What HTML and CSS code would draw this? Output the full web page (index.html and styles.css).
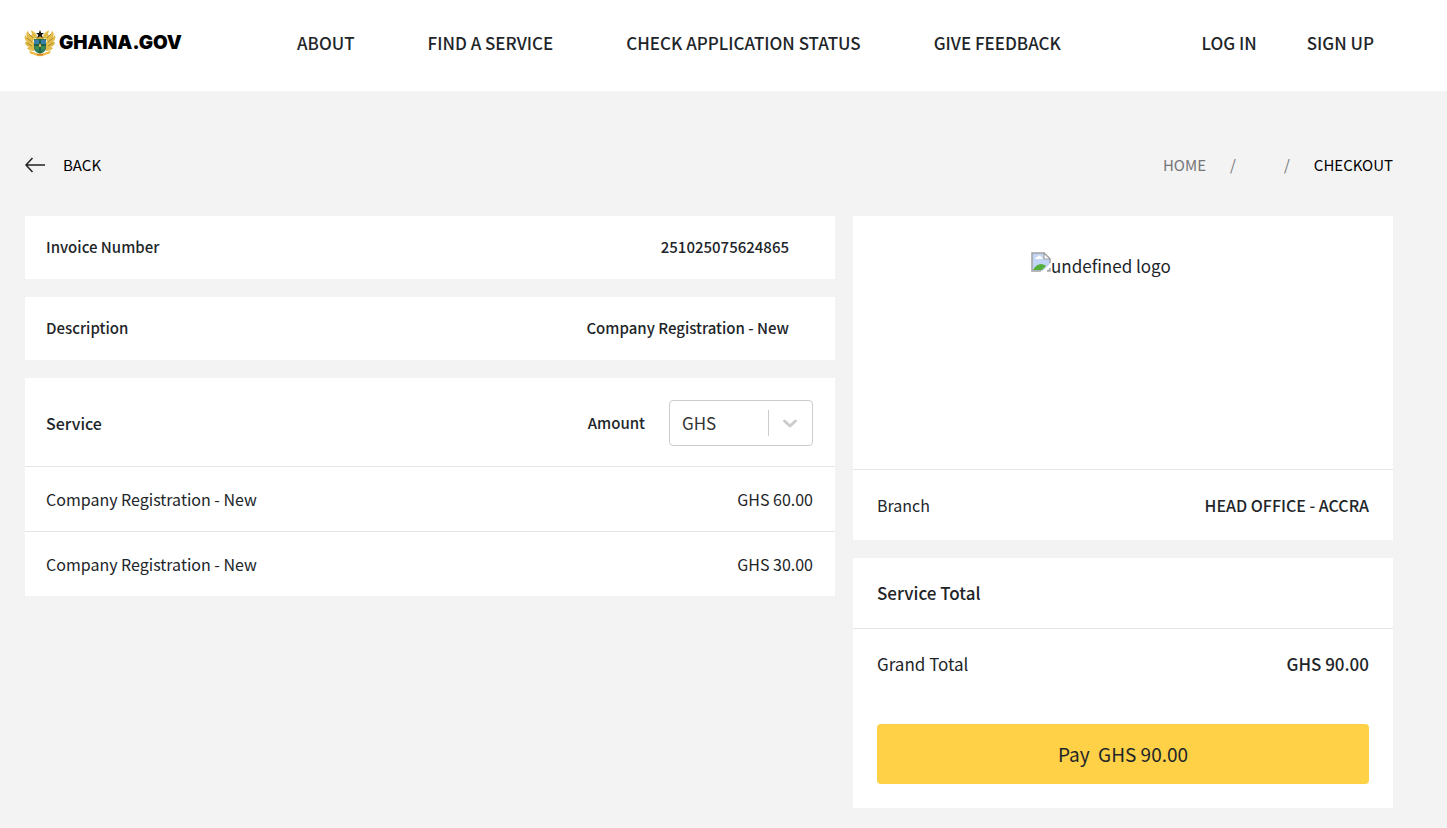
FILE: index.html
```
<!DOCTYPE html>
<html lang="en">
<head>
<meta charset="utf-8">
<title>Checkout - Ghana.GOV</title>
<link rel="stylesheet" href="styles.css">
</head>
<body>
<header class="site-header">
  <a class="brand" href="#" aria-label="Ghana.GOV home">
    <svg class="crest" viewBox="0 0 32 28" aria-hidden="true">
      <path d="M7 1C9 2 12 4 13 7L11 9L9 12L12 18L10 22C7 22 4 21 3 19L5 18C2 17 1 15 1 13L3 13C1 11 0 9 1 6L3 8C2 5 2 3 4 2L6 6L8 6Z" fill="#e2bd4c"/>
      <path d="M25 1C23 2 20 4 19 7L21 9L23 12L20 18L22 22C25 22 28 21 29 19L27 18C30 17 31 15 31 13L29 13C31 11 32 9 31 6L29 8C30 5 30 3 28 2L26 6L24 6Z" fill="#e2bd4c"/>
      <path d="M3 9L8 13M3 14L8 17M5 5L9 9M29 9L24 13M29 14L24 17M27 5L23 9" fill="none" stroke="#b08d2b" stroke-width="1"/>
      <path d="M10 10H22V19C22 22 19 24 16 25C13 24 10 22 10 19Z" fill="#2b7a5c"/>
      <path d="M10 11H15V15H10ZM17 11H22V15H17Z" fill="#3c7fa6"/>
      <path d="M11 17H15V22L11 20ZM17 17H21V20L17 22Z" fill="#3f8a54"/>
      <path d="M16 10V24M10 16H22" stroke="#1a5a48" stroke-width="1.500"/>
      <path d="M15 15H17V18H15Z" fill="#d9b343"/>
      <path d="M11 8C13 7 19 7 21 8L20 10H12Z" fill="#c9a63e"/>
      <path d="M16 1L17.200 4H20L17.800 6L18.600 9L16 7.200L13.400 9L14.200 6L12 4H14.800Z" fill="#17170f"/>
      <path d="M5 22C9 22 11 25 16 24.500C21 25 23 22 27 22L25 25C21 25 20 28 16 27C12 28 11 25 7 25Z" fill="#efb53a"/>
      <path d="M13 25.500C15 26 17 26 19 25.500" fill="none" stroke="#cf6d35"/>
    </svg>
    <span class="brand-name">GHANA.GOV</span>
  </a>
  <nav class="main-nav" aria-label="Main">
    <a href="#">ABOUT</a>
    <a href="#">FIND A SERVICE</a>
    <a href="#">CHECK APPLICATION STATUS</a>
    <a href="#">GIVE FEEDBACK</a>
  </nav>
  <nav class="account-nav" aria-label="Account">
    <a href="#">LOG IN</a>
    <a href="#">SIGN UP</a>
  </nav>
</header>
<main class="page">
  <div class="page-bar">
    <a class="back" href="#">
      <svg class="back-icon" viewBox="0 0 20 16" aria-hidden="true"><path d="M20 8H1M7.500 1L1 8L7.500 15" fill="none" stroke="#222" stroke-width="1.500"/></svg>
      <span>BACK</span>
    </a>
    <nav class="crumbs" aria-label="Breadcrumb">
      <a href="#">HOME</a>
      <span class="slash">/</span>
      <span class="slash">/</span>
      <span class="current">CHECKOUT</span>
    </nav>
  </div>
  <div class="columns">
    <div class="stack">
      <section class="card fact">
        <span>Invoice Number</span>
        <span>251025075624865</span>
      </section>
      <section class="card fact">
        <span>Description</span>
        <span>Company Registration - New</span>
      </section>
      <table class="card services">
        <thead>
          <tr>
            <th scope="col">Service</th>
            <th scope="col">
              <div class="amount">
                <label for="currency">Amount</label>
                <div class="picker">
                  <select id="currency"><option>GHS</option></select>
                  <svg class="picker-icon" viewBox="0 0 44 26" aria-hidden="true"><path d="M0.500 0V26" stroke="#ccc"/><path d="M16.500 11L22 16L27.500 11" fill="none" stroke="#ccc" stroke-width="3" stroke-linecap="round" stroke-linejoin="round"/></svg>
                </div>
              </div>
            </th>
          </tr>
        </thead>
        <tbody>
          <tr><td>Company Registration - New</td><td>GHS 60.00</td></tr>
          <tr><td>Company Registration - New</td><td>GHS 30.00</td></tr>
        </tbody>
      </table>
    </div>
    <div class="stack">
      <section class="card">
        <div class="logo-box">
          <div class="logo-fallback">
            <svg class="broken" viewBox="0 0 20 20" aria-hidden="true">
              <path d="M1 1H13L19 7V19H1Z" fill="#c3d5f5"/>
              <path d="M4 7C4 5 6 5 6.500 5C7 3 10 3 10 5C12 5 12 7 11 7Z" fill="#fff"/>
              <path d="M2 18C4 14 7 12 10 12C12 12 14 13 15 14L11 18Z" fill="#55ad3c"/>
              <path d="M10.500 20L20 11V15L14.500 20Z" fill="#fff"/>
              <path d="M10 19H1V1H13L19 7V11M19 16V19H16" fill="none" stroke="#a3a3a3" stroke-width="1.500"/>
              <path d="M13 1V7H19Z" fill="#fff" stroke="#a3a3a3" stroke-width="1.200"/>
            </svg>
            <span>undefined logo</span>
          </div>
        </div>
        <div class="line ruled">
          <span>Branch</span>
          <strong>HEAD OFFICE - ACCRA</strong>
        </div>
      </section>
      <section class="card">
        <h2 class="line total-title">Service Total</h2>
        <div class="line ruled large">
          <span>Grand Total</span>
          <strong>GHS 90.00</strong>
        </div>
        <div class="pay-box">
          <button class="pay" type="button">Pay&nbsp; GHS 90.00</button>
        </div>
      </section>
    </div>
  </div>
</main>
</body>
</html>
```
FILE: styles.css
```
* {
  box-sizing: border-box;
}

body {
  margin: 0;
  background: #f3f3f3;
  color: #212529;
  font: 400 16px/24px "Noto Sans CJK SC", "Open Sans", sans-serif;
}

a {
  color: inherit;
  text-decoration: none;
}

strong {
  font-weight: 500;
}

.site-header {
  display: flex;
  align-items: center;
  padding: 29px 73px 34px 24px;
  background: #fff;
  font-size: 17px;
  font-weight: 500;
}

.brand {
  display: flex;
  align-items: center;
  gap: 3px;
  color: #000;
}

.crest {
  width: 32px;
  height: 28px;
}

.brand-name {
  font: 900 19px/28px Inter, Lato, sans-serif;
}

.main-nav {
  display: flex;
  gap: 73px;
  margin-left: 115px;
}

.account-nav {
  display: flex;
  gap: 50px;
  margin-left: auto;
}

.page {
  padding: 62px 54px 20px 25px;
}

.page-bar {
  display: flex;
  align-items: center;
  justify-content: space-between;
  margin-bottom: 39px;
  font-size: 15px;
  color: #000;
}

.back {
  display: flex;
  align-items: center;
  gap: 18px;
}

.back-icon {
  width: 20px;
  height: 16px;
}

.crumbs {
  display: flex;
  gap: 24px;
  color: #767676;
}

.slash + .slash {
  margin-left: 24px;
}

.current {
  color: #000;
}

.columns {
  display: grid;
  grid-template-columns: 3fr 2fr;
  align-items: start;
  gap: 18px;
}

.stack {
  display: grid;
  gap: 18px;
}

.card {
  background: #fff;
}

.fact {
  display: flex;
  justify-content: space-between;
  padding: 19px 46px 20px 21px;
  font-size: 15px;
  font-weight: 500;
}

.services {
  width: 100%;
  border-collapse: collapse;
}

.services th {
  padding: 22px 22px 20px 21px;
  font-weight: 500;
  text-align: left;
}

.services td {
  padding: 20px 22px 20px 21px;
  border-top: 1px solid #e5e5e5;
}

.services td:last-child {
  text-align: right;
}

.amount {
  display: flex;
  align-items: center;
  justify-content: flex-end;
  gap: 24px;
  font-size: 15px;
}

.picker {
  position: relative;
  width: 144px;
}

.picker select {
  display: block;
  width: 100%;
  height: 46px;
  padding: 0 12px;
  border: 1px solid #ccc;
  border-radius: 4px;
  appearance: none;
  background: #fff;
  color: #333;
  font: inherit;
  font-size: 17px;
  font-weight: 400;
}

.picker-icon {
  position: absolute;
  top: 10px;
  right: 1px;
  width: 44px;
  height: 26px;
  pointer-events: none;
}

.logo-box {
  display: flex;
  justify-content: center;
  min-height: 253px;
  padding: 36px 24px;
}

.logo-fallback {
  display: flex;
  align-items: flex-start;
  width: 184px;
  font-size: 17px;
  line-height: 28px;
}

.broken {
  width: 20px;
  height: 20px;
}

.line {
  display: flex;
  justify-content: space-between;
  margin: 0;
  padding: 23px 24px;
}

.ruled {
  border-top: 1px solid #e5e5e5;
}

.total-title {
  font-size: 17px;
  font-weight: 500;
  line-height: 24px;
}

.large {
  font-size: 17px;
}

.pay-box {
  padding: 25px 24px 24px;
}

.pay {
  display: block;
  width: 100%;
  height: 60px;
  border: 0;
  border-radius: 4px;
  background: #ffd147;
  color: #212529;
  font: inherit;
  font-size: 19px;
}
```
